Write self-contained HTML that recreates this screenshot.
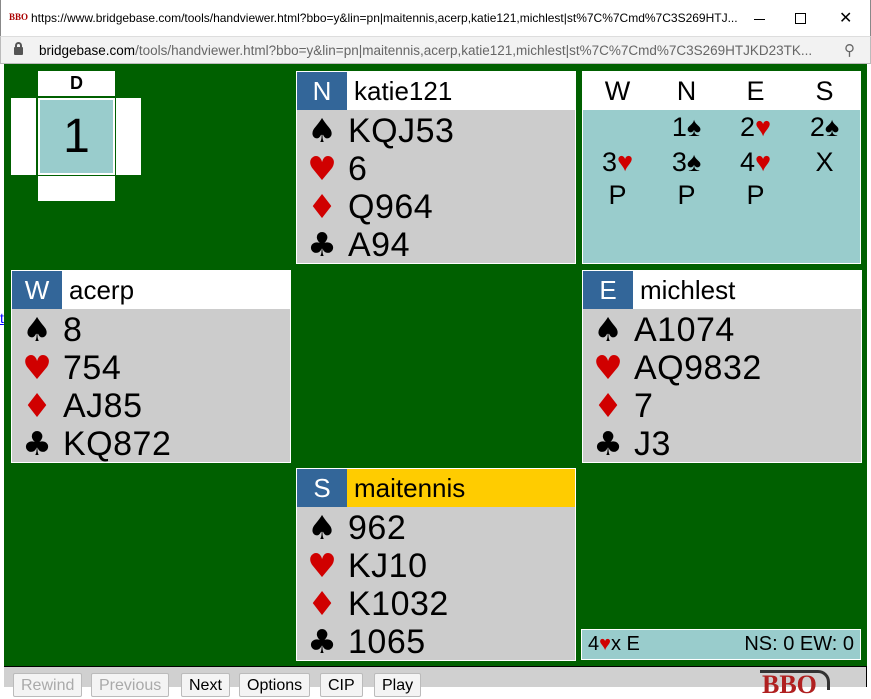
<!DOCTYPE html>
<html><head><meta charset="utf-8"><style>
*{margin:0;padding:0;box-sizing:border-box}
body{width:871px;height:687px;overflow:hidden;background:#fff;font-family:"Liberation Sans",Arial,sans-serif;position:relative}
.abs{position:absolute}
.title{left:0;top:0;width:871px;height:36px;background:#fff;border-left:1px solid #888;border-right:1px solid #888}
.addr{left:0;top:36px;width:871px;height:28px;background:#f2f2f2;border:1px solid #bbb;border-top:1px solid #ddd}
.green{left:4px;top:64px;width:863px;height:602px;background:#006000}
.tool{left:4px;top:666px;width:863px;height:21px;background:#d0d0d0;border-top:1px solid #000}
.hand{position:absolute;width:280px;height:193px;border:1px solid #fff;background:#cccccc;overflow:hidden}
.hd{position:absolute;left:0;top:0;width:278px;height:38px;background:#fff}
.lab{position:absolute;left:0;top:0;width:50px;height:38px;background:#336699;color:#fff;font-size:26px;text-align:center;line-height:38px}
.nm{position:absolute;left:57px;top:0;font-size:26px;line-height:38px;color:#000}
.ln{position:absolute;left:0;height:38px;width:278px;font-size:34px;line-height:38px;color:#000}
.ln .s{position:absolute;left:8px;width:34px;text-align:center;font-size:33px;font-family:"DejaVu Sans",sans-serif;line-height:38px}
.ln .c{position:absolute;left:51px;letter-spacing:0.5px}
.r{color:#d00000}
.auc{left:582px;top:71px;width:279px;height:193px;background:#99cccc;border:1px solid #fff}
.auc div{position:absolute;width:69px;text-align:center;font-size:27px;line-height:30px}
.btn{position:absolute;top:673px;height:24px;background:#f4f4f4;border:1px solid #bbb;border-radius:2px;font-size:16px;line-height:24px;padding:0 7px;color:#000}
</style></head><body>
<div class="abs title">
 <div class="abs" style="left:8px;top:12px;font-size:9px;color:#a00;font-weight:bold;font-family:'Liberation Serif',serif">BBO</div>
 <div class="abs" style="left:30px;top:11px;font-size:12px;color:#000;white-space:nowrap">https://www.bridgebase.com/tools/handviewer.html?bbo=y&amp;lin=pn|maitennis,acerp,katie121,michlest|st%7C%7Cmd%7C3S269HTJ...</div>
 <div class="abs" style="left:753px;top:19px;width:11px;height:1px;background:#000"></div>
 <div class="abs" style="left:794px;top:13px;width:11px;height:11px;border:1px solid #000"></div>
 <div class="abs" style="left:838px;top:8px;font-size:16px">✕</div>
</div>
<div class="abs addr">
 <div class="abs" style="left:13px;top:10px;width:9px;height:8px;background:#555;border-radius:1px"></div>
 <div class="abs" style="left:14px;top:5px;width:7px;height:7px;border:2px solid #555;border-radius:4px 4px 0 0"></div>
 <div class="abs" style="left:38px;top:6px;font-size:13.5px;color:#666;white-space:nowrap"><span style="color:#000">bridgebase.com</span>/tools/handviewer.html?bbo=y&amp;lin=pn|maitennis,acerp,katie121,michlest|st%7C%7Cmd%7C3S269HTJKD23TK...</div>
 <div class="abs" style="left:843px;top:4px;font-size:15px;color:#666">⚲</div>
</div>
<div class="abs green"></div>
<div class="abs" style="left:0;top:310px;font-size:14px;color:#00f;text-decoration:underline">t</div>
<div class="abs" style="left:38px;top:71px;width:77px;height:25px;background:#fff;font-size:18px;font-weight:bold;text-align:center;line-height:25px">D</div>
<div class="abs" style="left:11px;top:98px;width:25px;height:77px;background:#fff"></div>
<div class="abs" style="left:116px;top:98px;width:25px;height:77px;background:#fff"></div>
<div class="abs" style="left:38px;top:98px;width:77px;height:77px;background:#fff"></div>
<div class="abs" style="left:40px;top:100px;width:73px;height:73px;background:#99cccc;font-size:48px;text-align:center;line-height:73px">1</div>
<div class="abs" style="left:38px;top:176px;width:77px;height:25px;background:#fff"></div>

<div class="hand" style="left:296px;top:71px">
 <div class="hd"><div class="lab">N</div><div class="nm">katie121</div></div>
 <div class="ln" style="top:40px"><span class="s">♠</span><span class="c">KQJ53</span></div>
 <div class="ln" style="top:78px"><span class="s r">♥</span><span class="c">6</span></div>
 <div class="ln" style="top:116px"><span class="s r">♦</span><span class="c">Q964</span></div>
 <div class="ln" style="top:154px"><span class="s">♣</span><span class="c">A94</span></div>
</div>
<div class="hand" style="left:11px;top:270px">
 <div class="hd"><div class="lab">W</div><div class="nm">acerp</div></div>
 <div class="ln" style="top:40px"><span class="s">♠</span><span class="c">8</span></div>
 <div class="ln" style="top:78px"><span class="s r">♥</span><span class="c">754</span></div>
 <div class="ln" style="top:116px"><span class="s r">♦</span><span class="c">AJ85</span></div>
 <div class="ln" style="top:154px"><span class="s">♣</span><span class="c">KQ872</span></div>
</div>
<div class="hand" style="left:582px;top:270px">
 <div class="hd"><div class="lab">E</div><div class="nm">michlest</div></div>
 <div class="ln" style="top:40px"><span class="s">♠</span><span class="c">A1074</span></div>
 <div class="ln" style="top:78px"><span class="s r">♥</span><span class="c">AQ9832</span></div>
 <div class="ln" style="top:116px"><span class="s r">♦</span><span class="c">7</span></div>
 <div class="ln" style="top:154px"><span class="s">♣</span><span class="c">J3</span></div>
</div>
<div class="hand" style="left:296px;top:468px">
 <div class="hd"><div class="lab">S</div><div class="nm" style="left:50px;width:228px;height:38px;background:#ffcc00;padding-left:7px">maitennis</div></div>
 <div class="ln" style="top:40px"><span class="s">♠</span><span class="c">962</span></div>
 <div class="ln" style="top:78px"><span class="s r">♥</span><span class="c">KJ10</span></div>
 <div class="ln" style="top:116px"><span class="s r">♦</span><span class="c">K1032</span></div>
 <div class="ln" style="top:154px"><span class="s">♣</span><span class="c">1065</span></div>
</div>
<div class="abs auc">
 <div style="left:0;top:0;width:277px;height:38px;background:#fff"></div>
 <div style="left:0;top:4px">W</div><div style="left:69px;top:4px">N</div><div style="left:138px;top:4px">E</div><div style="left:207px;top:4px">S</div>
 <div style="left:69px;top:40px">1♠</div><div style="left:138px;top:40px">2<span class="r">♥</span></div><div style="left:207px;top:40px">2♠</div>
 <div style="left:0;top:75px">3<span class="r">♥</span></div><div style="left:69px;top:75px">3♠</div><div style="left:138px;top:75px">4<span class="r">♥</span></div><div style="left:207px;top:75px">X</div>
 <div style="left:0;top:108px">P</div><div style="left:69px;top:108px">P</div><div style="left:138px;top:108px">P</div>
</div>
<div class="abs" style="left:581px;top:629px;width:280px;height:31px;background:#99cccc;border:1px solid #fff;font-size:20px;line-height:29px">
 <span class="abs" style="left:6px">4<span class="r">♥</span>x E</span>
 <span class="abs" style="right:6px">NS: 0 EW: 0</span>
</div>
<div class="abs tool"></div>
<div class="btn" style="left:13px;color:#aaa">Rewind</div>
<div class="btn" style="left:91px;color:#aaa">Previous</div>
<div class="btn" style="left:181px">Next</div>
<div class="btn" style="left:239px">Options</div>
<div class="btn" style="left:320px">CIP</div>
<div class="btn" style="left:374px">Play</div>
<div class="abs" style="left:760px;top:670px;width:70px;height:20px;border-top:3px solid #333;border-right:3px solid #333;border-radius:0 12px 0 0"></div>
<div class="abs" style="left:762px;top:672px;font-size:26px;font-weight:bold;color:#b02020;font-family:'Liberation Serif',serif;line-height:26px">BBO</div>
<div class="abs" style="left:866px;top:666px;width:5px;height:21px;background:#fff;border-left:1px solid #000"></div>
</body></html>
